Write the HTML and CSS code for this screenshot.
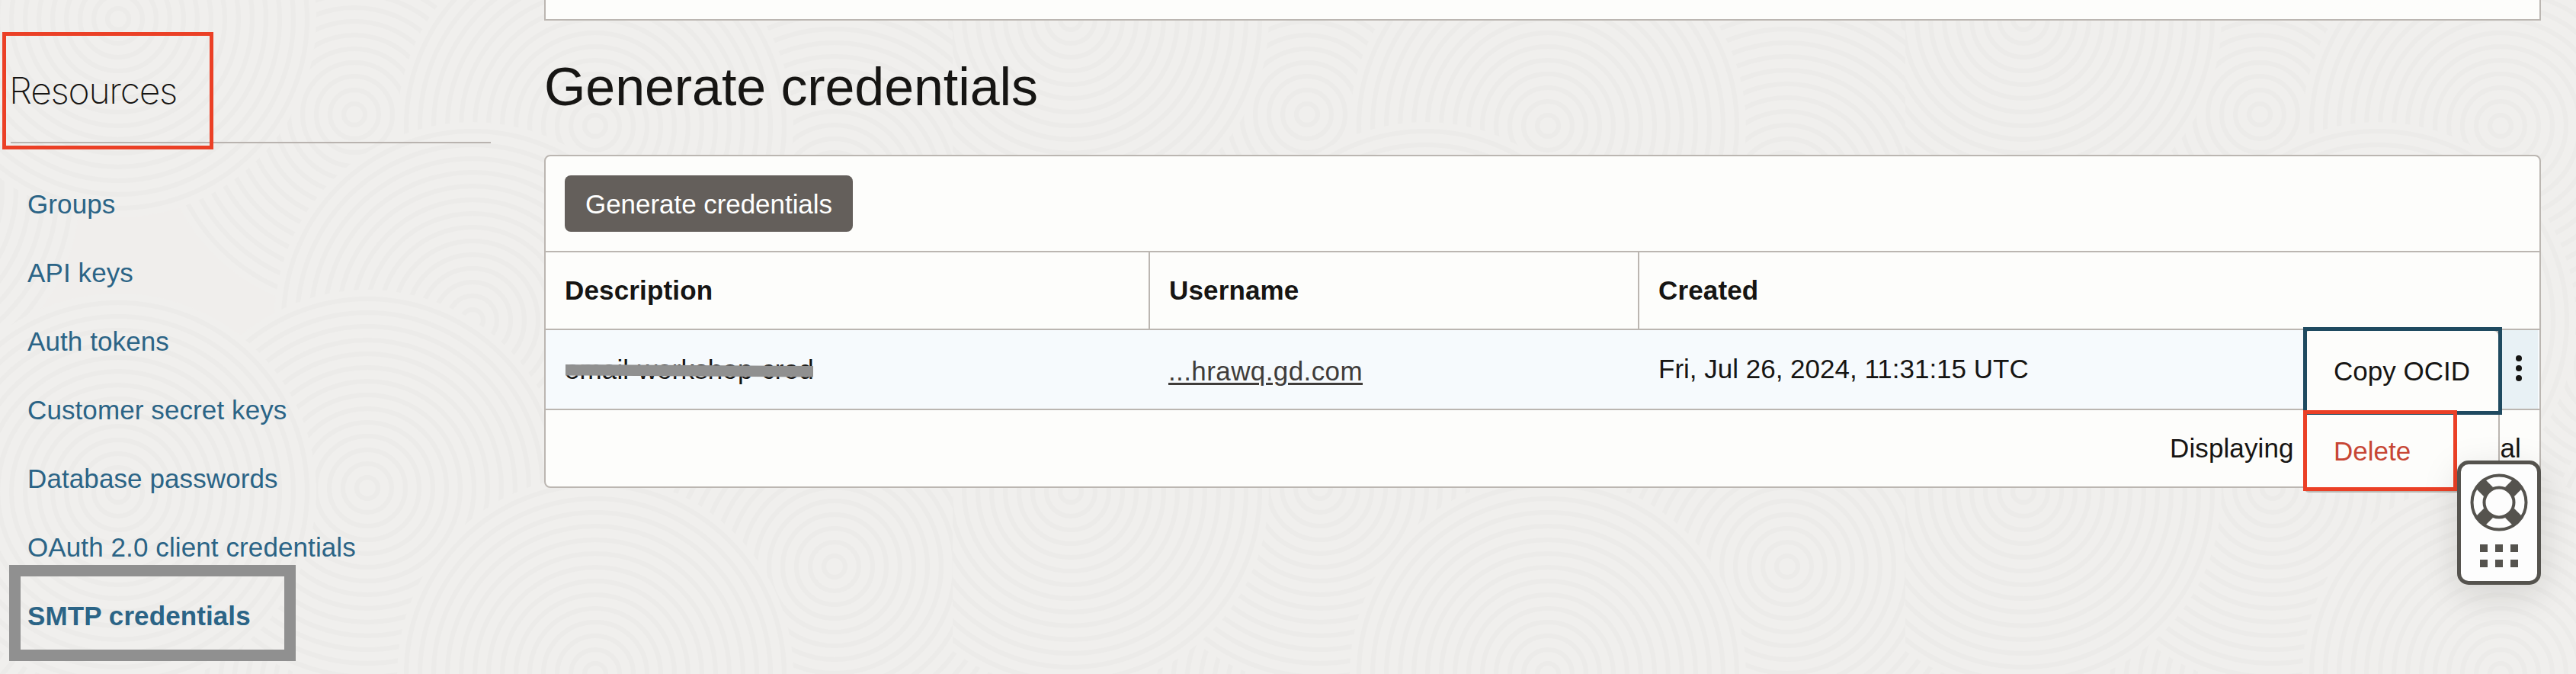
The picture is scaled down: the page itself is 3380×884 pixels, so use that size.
FILE: index.html
```html
<!DOCTYPE html>
<html lang="en">
<head>
<meta charset="utf-8">
<title>Generate credentials</title>
<link rel="stylesheet" href="styles.css">
</head>
<body>
<svg class="texture" width="3380" height="884" aria-hidden="true">
  <defs>
    <g id="rings">
      <circle class="disc" r="260"/>
      <circle r="14"/><circle r="32"/><circle r="50"/><circle r="68"/><circle r="86"/><circle r="104"/><circle r="122"/><circle r="140"/><circle r="158"/><circle r="176"/><circle r="194"/><circle r="212"/><circle r="230"/><circle r="248"/>
    </g>
    <g id="swirls">
      <use href="#rings" x="930" y="480"/>
      <use href="#rings" x="1095" y="250"/>
      <use href="#rings" x="465" y="900"/>
      <use href="#rings" x="1095" y="743"/>
      <use href="#rings" x="465" y="150"/>
      <use href="#rings" x="781" y="165"/>
      <use href="#rings" x="620" y="420"/>
      <use href="#rings" x="482" y="640"/>
      <use href="#rings" x="781" y="884"/>
      <use href="#rings" x="155" y="25"/>
      <use href="#rings" x="155" y="645"/>
    </g>
    <pattern id="tile" width="1250" height="884" patternUnits="userSpaceOnUse">
      <use href="#swirls" x="-1250"/>
      <use href="#swirls" x="1250"/>
      <use href="#swirls"/>
    </pattern>
  </defs>
  <rect class="sheet" width="3380" height="884" fill="url(#tile)"/>
</svg>

<div class="page">
  <aside class="sidebar">
    <h2 class="sidebar-title">Resources</h2>
    <ul class="links">
      <li><a>Groups</a></li>
      <li><a>API keys</a></li>
      <li><a>Auth tokens</a></li>
      <li><a>Customer secret keys</a></li>
      <li><a>Database passwords</a></li>
      <li><a>OAuth 2.0 client credentials</a></li>
      <li><a class="current">SMTP credentials</a></li>
    </ul>
    <div class="mark mark-resources"></div>
    <div class="mark mark-smtp"></div>
  </aside>

  <main class="main">
    <div class="previous-panel"></div>
    <h1 class="title">Generate credentials</h1>
    <section class="panel">
      <div class="toolbar"><button class="button">Generate credentials</button></div>
      <div class="row head">
        <div class="cell divided">Description</div>
        <div class="cell divided">Username</div>
        <div class="cell">Created</div>
      </div>
      <div class="row item">
        <div class="cell"><span class="redacted">email-workshop-cred
          <svg class="redaction" width="326" height="20" viewBox="0 0 326 20"><path d="M0 1 L325 3 V17.500 L0 15.500Z" fill="#909090"/></svg></span></div>
        <div class="cell"><a class="username">...hrawq.gd.com</a></div>
        <div class="cell date">Fri, Jul 26, 2024, 11:31:15 UTC</div>
        <div class="kebab"><i></i><i></i><i></i></div>
      </div>
      <div class="footer"><span>Displaying</span><span>al</span></div>
    </section>

    <div class="menu">
      <div class="menu-item">Copy OCID</div>
      <div class="menu-item danger">Delete</div>
    </div>
    <div class="mark mark-copy"></div>
    <div class="mark mark-delete"></div>

    <div class="help">
      <svg class="buoy" width="76" height="76" viewBox="-38 -38 76 76">
        <g stroke="#55534e" fill="none">
          <circle r="35.500" stroke-width="4"/>
          <circle r="19.500" stroke-width="4"/>
          <path d="M-25 -25 L-14 -14 M25 -25 L14 -14 M-25 25 L-14 14 M25 25 L14 14" stroke-width="17"/>
        </g>
      </svg>
      <div class="grip"><i></i><i></i><i></i><i></i><i></i><i></i></div>
    </div>
  </main>
</div>
</body>
</html>
```

FILE: styles.css
```css
* { box-sizing: border-box; }

body {
  margin: 0;
  width: 3380px;
  height: 884px;
  overflow: hidden;
  background: #f0eeec;
  color: #161513;
  font-family: "Liberation Sans", Arial, sans-serif;
  font-size: 35px;
  letter-spacing: 0.1px;
}

.texture {
  position: absolute;
  left: 0;
  top: 0;
  z-index: -1;
  fill: none;
  stroke: #ecebe9;
  stroke-width: 6;
}
.texture .disc { fill: #f0efed; stroke: none; }
.texture .sheet { stroke: none; }

.page { display: flex; height: 884px; }

/* Sidebar */
.sidebar {
  position: relative;
  width: 714px;
  padding: 0 70px 0 14px;
}
.sidebar-title {
  margin: 0;
  padding: 89px 0 37px;
  border-bottom: 2px solid #b9b3af;
  font-family: Inter, sans-serif;
  font-size: 48px;
  font-weight: 200;
  line-height: 60px;
  letter-spacing: -1.25px;
  text-indent: -2px;
}
.links {
  margin: 0;
  padding: 35px 0 0 22px;
  list-style: none;
  line-height: 90px;
  letter-spacing: 0.1px;
  color: #2b6486;
}
.links .current { font-weight: bold; }

/* Highlight boxes drawn over the page */
.mark { position: absolute; border: 5px solid #eb4026; }
.mark-resources { left: 3px; top: 42px; width: 277px; height: 154px; }
.mark-smtp { left: 12px; top: 741px; width: 376px; height: 126px; border: 15px solid #909090; }
.mark-copy { left: 2308px; top: 429px; width: 261px; height: 115px; border-color: #1f4a60; }
.mark-delete { left: 2308px; top: 538px; width: 202px; height: 106px; }

/* Main column */
.main { position: relative; width: 2620px; }
.previous-panel {
  height: 27px;
  border: 2px solid #bbb6b1;
  border-top: 0;
  background: #fdfdfb;
}
.title {
  margin: 47px 0 49px;
  font-size: 70px;
  font-weight: normal;
  line-height: 80px;
  letter-spacing: -0.1px;
}
.panel {
  overflow: hidden;
  border: 2px solid #bbb6b1;
  border-radius: 8px;
  background: #fdfdfb;
}
.toolbar {
  display: flex;
  align-items: center;
  height: 124px;
  padding: 0 25px;
}
.button {
  width: 378px;
  height: 74px;
  padding: 2px 0 0;
  border: 0;
  border-radius: 8px;
  background: #645f5b;
  color: #fff;
  font: inherit;
  letter-spacing: -0.05px;
}
.row {
  display: grid;
  grid-template-columns: 793px 642px 1fr;
  border-top: 2px solid #bbb6b1;
}
.cell { display: flex; align-items: center; padding: 0 25px; }
.head { height: 102px; font-weight: bold; letter-spacing: 0.15px; }
.divided { border-right: 2px solid #bbb6b1; }
.item {
  grid-template-columns: 793px 642px 1fr 52px;
  height: 105px;
  background: #f6fafd;
}
.redacted { position: relative; }
.redaction { position: absolute; left: 1px; top: 12px; }
.username {
  margin-left: -1px;
  padding-top: 5px;
  color: #3f3c3a;
  letter-spacing: 0.4px;
  text-decoration: underline;
  text-decoration-thickness: 3px;
  text-underline-offset: 3px;
}
.date { padding-bottom: 2px; letter-spacing: 0; }
.kebab {
  display: flex;
  flex-direction: column;
  align-items: center;
  justify-content: center;
  gap: 5px;
  margin-right: 2px;
  padding-bottom: 3px;
  background: #e8f1f5;
}
.kebab i { width: 8px; height: 8px; border-radius: 50%; background: #161513; }
.footer {
  display: flex;
  justify-content: flex-end;
  gap: 271px;
  height: 102px;
  padding-right: 24px;
  border-top: 2px solid #bbb6b1;
  line-height: 100px;
}

/* Row action menu */
.menu {
  position: absolute;
  left: 2308px;
  top: 432px;
  width: 258px;
  height: 214px;
  border: 2px solid #bbb6b1;
  border-radius: 8px;
  background: #fdfdfb;
}
.menu-item { padding-left: 38px; line-height: 105px; letter-spacing: 0; }
.danger { color: #c74634; }

/* Floating help widget */
.help {
  position: absolute;
  left: 2510px;
  top: 604px;
  display: flex;
  flex-direction: column;
  align-items: center;
  gap: 17px;
  width: 110px;
  height: 163px;
  padding-top: 12px;
  border: 5px solid #55534e;
  border-radius: 15px;
  background: #fdfdfd;
  box-shadow: 0 12px 48px rgba(22, 21, 19, 0.13);
}
.buoy { display: block; }
.grip { display: grid; grid-template-columns: repeat(3, 10px); gap: 10px; }
.grip i { height: 10px; background: #55534e; }
```
